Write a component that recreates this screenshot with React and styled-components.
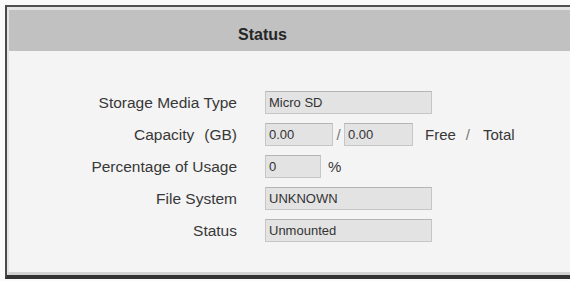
import React from 'react';
import styled, { createGlobalStyle } from 'styled-components';

const GlobalStyle = createGlobalStyle`
  body {
    margin: 0;
    background: #fafafa;
    font-family: "Liberation Sans", Arial, sans-serif;
  }
`;

const rows = [
  { label: 'Storage Media Type', kind: 'text', value: 'Micro SD' },
  { label: 'Capacity', unit: '(GB)', kind: 'capacity', free: '0.00', total: '0.00' },
  { label: 'Percentage of Usage', kind: 'percent', value: '0' },
  { label: 'File System', kind: 'text', value: 'UNKNOWN' },
  { label: 'Status', kind: 'text', value: 'Unmounted' },
];

export default function App() {
  return (
    <>
      <GlobalStyle />
      <Page>
        <Panel>
          <Inner>
            <Header>Status</Header>
            <Body>
              <Form>
                {rows.map((row) => (
                  <Row key={row.label} row={row} />
                ))}
              </Form>
            </Body>
          </Inner>
        </Panel>
      </Page>
    </>
  );
}

const Row = ({ row }) => (
  <>
    <Label>
      {row.label}
      {row.unit && <Unit>{row.unit}</Unit>}
    </Label>
    <Field>
      {row.kind === 'text' && <Box width={167}>{row.value}</Box>}
      {row.kind === 'capacity' && (
        <>
          <Box width={68}>{row.free}</Box>
          <Slash>/</Slash>
          <Box width={69}>{row.total}</Box>
          <Legend>
            <span>Free</span>
            <span>/</span>
            <span>Total</span>
          </Legend>
        </>
      )}
      {row.kind === 'percent' && (
        <>
          <Box width={56}>{row.value}</Box>
          <Suffix>%</Suffix>
        </>
      )}
    </Field>
  </>
);

const Page = styled.div`
  padding: 5px 0 4px 5px;
  overflow: hidden;
`;

const Panel = styled.section`
  width: 600px;
  border-top: 2px solid #505050;
  border-left: 2px solid #4a4a4a;
  border-bottom: 4px solid #333;
`;

const Inner = styled.div`
  border: 2px solid #e4e4e4;
  border-top-width: 3px;
  border-right: none;
  border-bottom: 3px solid #d2d2d2;
  background: #f4f4f4;
`;

const Header = styled.div`
  height: 41px;
  background: #c1c1c1;
  display: flex;
  align-items: center;
  padding-left: 229px;
  padding-top: 8px;
  box-sizing: border-box;
  font-size: 16px;
  font-weight: 700;
  color: #262626;
`;

const Body = styled.div`
  height: 221px;
  padding-top: 40px;
  box-sizing: border-box;
`;

const Form = styled.div`
  display: grid;
  grid-template-columns: 228px auto;
  column-gap: 28px;
  row-gap: 9px;
  align-items: center;
`;

const Label = styled.div`
  text-align: right;
  font-size: 15.5px;
  color: #383838;
  line-height: 23px;
`;

const Unit = styled.span`
  margin-left: 10px;
`;

const Field = styled.div`
  display: flex;
  align-items: center;
  height: 23px;
`;

const Box = styled.div`
  width: ${(p) => p.width}px;
  height: 23px;
  box-sizing: border-box;
  background: #e3e3e3;
  border: 1px solid #c6c6c6;
  border-top-color: #b4b4b4;
  padding-left: 3px;
  font-size: 13px;
  line-height: 21px;
  color: #333;
`;

const Slash = styled.span`
  width: 11px;
  text-align: center;
  font-size: 15px;
  color: #777;
`;

const Legend = styled.div`
  display: flex;
  gap: 10px;
  margin-left: 12px;
  font-size: 15px;
  color: #383838;

  span:nth-child(2) {
    color: #777;
    margin-right: 3px;
  }
`;

const Suffix = styled.span`
  margin-left: 7px;
  font-size: 15px;
  color: #383838;
`;
